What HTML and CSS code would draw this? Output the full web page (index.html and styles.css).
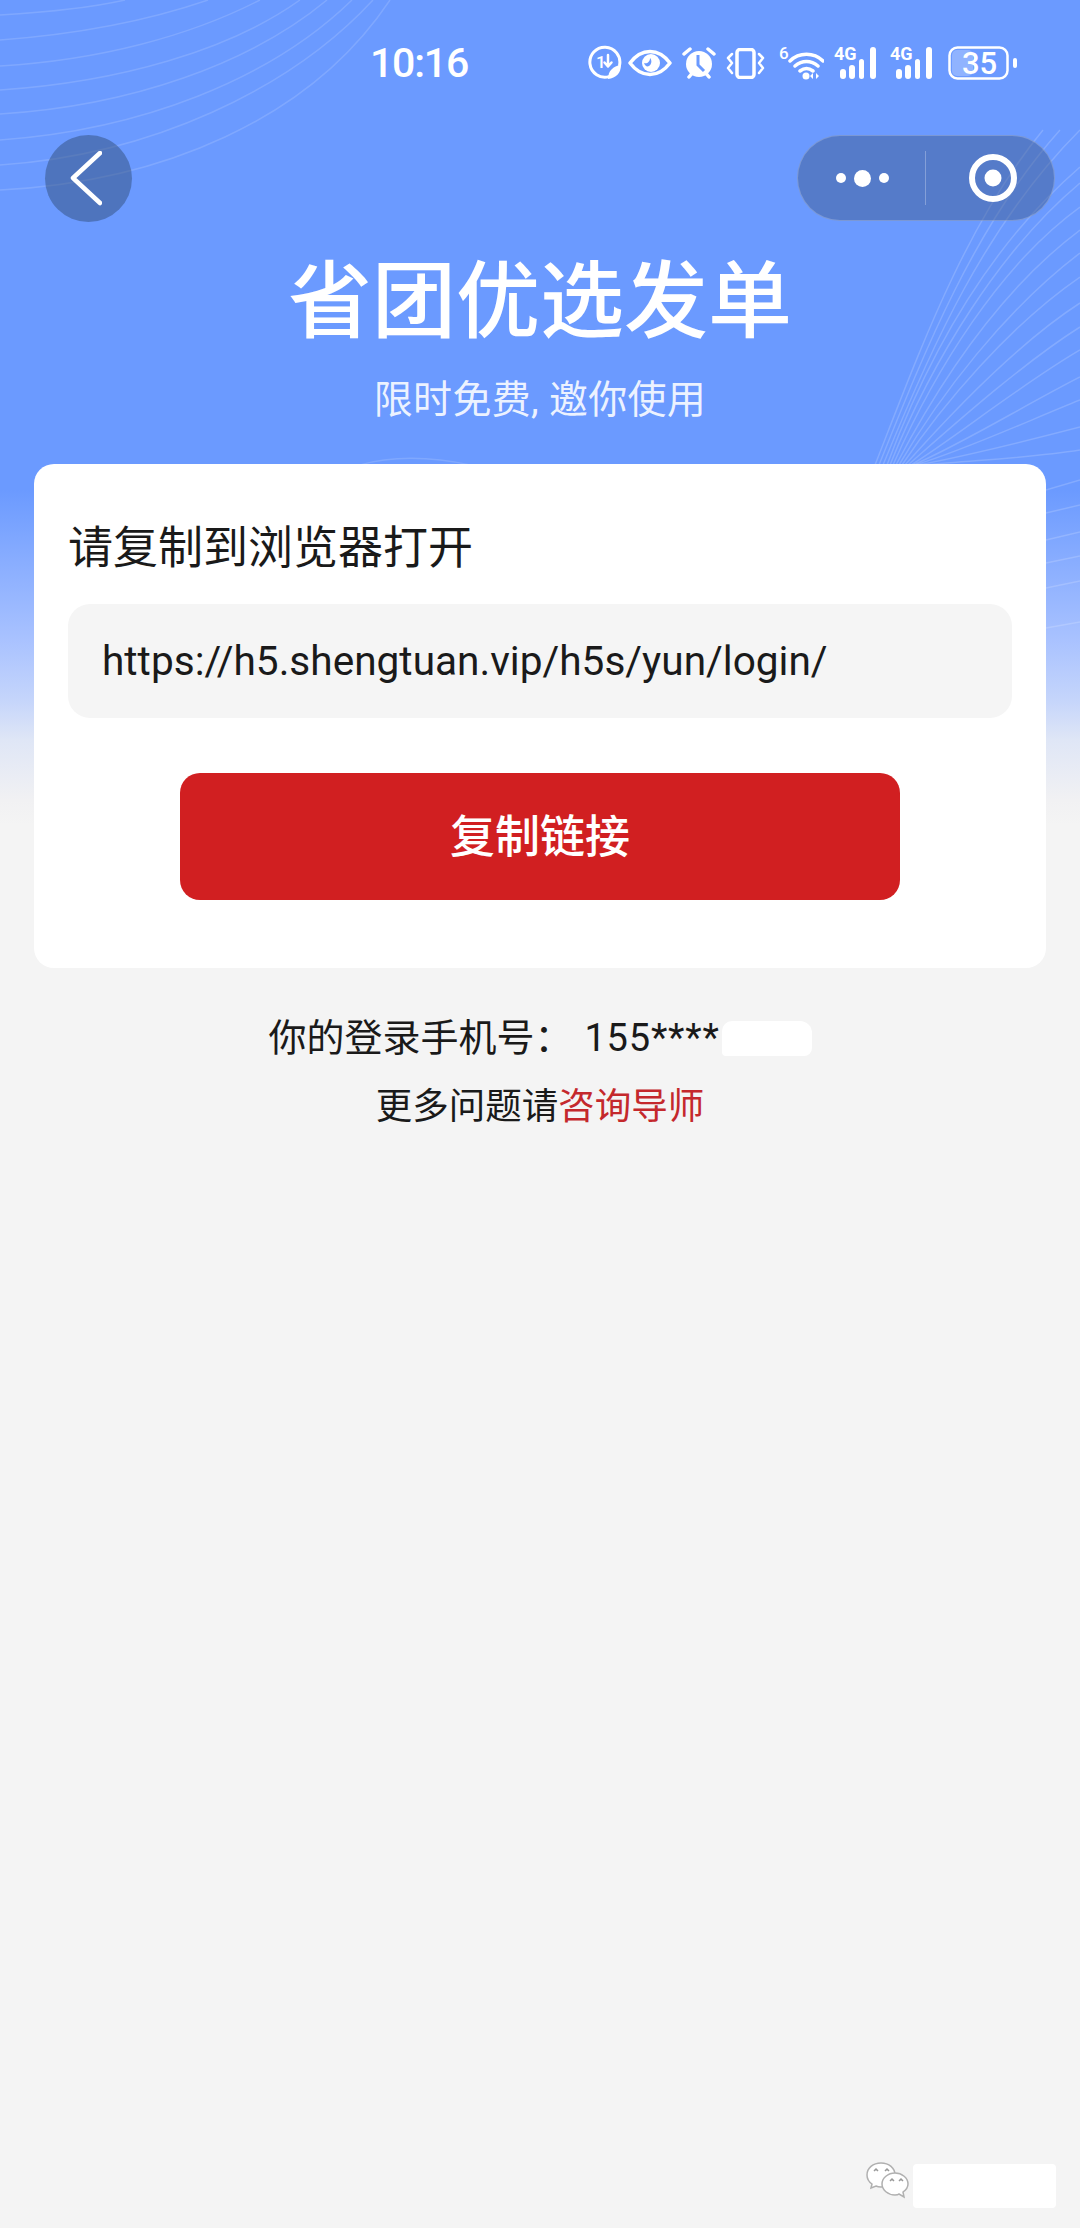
FILE: index.html
```html
<!DOCTYPE html>
<html lang="zh-CN">
<head>
<meta charset="utf-8">
<title>省团优选发单</title>
<link rel="stylesheet" href="styles.css">
</head>
<body>
<div class="page">
  <svg class="waves" width="1080" height="1000" viewBox="0 0 1080 1000" fill="none" aria-hidden="true">
    <g class="wave-left">
      <path d="M0 15C50 12 90 8 125 0"/>
      <path d="M0 40C80 34 150 20 208 0"/>
      <path d="M0 66C100 60 190 36 260 0"/>
      <path d="M0 90C120 82 230 50 300 0"/>
      <path d="M0 114C130 106 250 64 327 0"/>
      <path d="M0 140C140 130 270 80 352 0"/>
      <path d="M0 165C150 155 290 90 373 0"/>
      <path d="M0 190C160 182 310 120 390 0"/>
      <path d="M360 465C390 456 430 456 470 465"/>
    </g>
    <g class="wave-fan">
      <path d="M875 465C920 350 965 225 1043 130"/>
      <path d="M879 465C925 350 975 225 1060 130"/>
      <path d="M883 465C930 350 985 225 1080 130"/>
      <path d="M887 465C930 350 990 245 1080 167"/>
      <path d="M890 465C932 360 1000 250 1080 183"/>
      <path d="M893 465C935 370 1000 265 1080 207"/>
      <path d="M896 465C938 385 1000 290 1080 230"/>
      <path d="M899 465C940 395 1005 310 1080 253"/>
      <path d="M902 465C942 405 1010 325 1080 277"/>
      <path d="M905 465C945 420 1015 345 1080 303"/>
      <path d="M908 465C948 430 1020 365 1080 327"/>
      <path d="M911 465C952 440 1020 385 1080 350"/>
      <path d="M913 465C960 445 1025 405 1080 377"/>
      <path d="M915 465C965 450 1030 420 1080 400"/>
      <path d="M918 465C970 455 1030 440 1080 427"/>
      <path d="M925 465C975 460 1030 458 1080 450"/>
      <path d="M1046 490L1080 480"/>
      <path d="M1046 513L1080 505"/>
      <path d="M1046 540L1080 532"/>
      <path d="M1046 563L1080 556"/>
      <path d="M1046 588L1080 581"/>
      <path d="M1046 628L1080 622"/>
    </g>
  </svg>

  <header class="status">
    <span class="time">10:16</span>
    <div class="status-icons">
      <svg class="ic ic-leaf" width="34" height="42" viewBox="0 -4 34 42">
        <path class="s" d="M21 30.600A15 15 0 1 1 31.600 19"/>
        <text class="ic-t" x="8" y="22">1</text>
        <path class="s2" d="M20 9v11M16.500 16.500l3.500 4 3.500-4"/>
        <path class="f" d="M33 19c0 8-5 13-13 14 0-8 5-13 13-14z"/>
      </svg>
      <svg class="ic ic-eye" width="44" height="28" viewBox="0 0 44 28">
        <path class="s3" d="M2 14C8 6 15 2.500 22 2.500S36 6 42 14C36 22 29 25.500 22 25.500S8 22 2 14z"/>
        <circle class="f" cx="23" cy="14" r="9"/>
        <path class="cut" d="M16 14c3 1 6-1 6-5 2 2 2 6-1 8-2 1-4 0-5-3z"/>
      </svg>
      <svg class="ic ic-alarm" width="34" height="34" viewBox="0 0 34 34">
        <path class="s3" d="M2 8l6-5M32 8l-6-5M7 31l2.500-3M27 31l-2.500-3"/>
        <circle class="f" cx="17" cy="18" r="13"/>
        <path class="hand" d="M16 9v10l6 6"/>
      </svg>
      <svg class="ic ic-vib" width="39" height="31" viewBox="0 0 39 31">
        <rect class="s3" x="11" y="1.500" width="17" height="28" rx="3"/>
        <path class="s2" d="M6 6L2 10l4 5-4 5 4 5M33 6l4 4-4 5 4 5-4 5"/>
      </svg>
      <svg class="ic ic-wifi" width="45" height="41" viewBox="0 -4 45 41">
        <text class="ic-t" x="0" y="12">6</text>
        <path class="s3" d="M11 14C20 5 35 5 44 14M16 19C23 13 32 13 39 19M21 24C25 21 30 21 34 24"/>
        <circle class="f" cx="27" cy="29" r="3.500"/>
        <path class="f" d="M34 26v6l-3-3zM37 26v6l3-3z"/>
      </svg>
      <svg class="ic ic-sig" width="46" height="42" viewBox="0 -4 46 42">
        <text class="ic-g" x="0" y="14">4G</text>
        <rect class="f" x="6" y="23" width="6" height="10" rx="3"/>
        <rect class="f" x="15" y="19" width="6" height="14" rx="3"/>
        <rect class="f" x="25" y="13" width="5" height="20" rx="2.500"/>
        <rect class="f" x="36" y="1" width="6" height="32" rx="3"/>
      </svg>
      <svg class="ic ic-sig" width="46" height="42" viewBox="0 -4 46 42">
        <text class="ic-g" x="0" y="14">4G</text>
        <rect class="f" x="6" y="23" width="6" height="10" rx="3"/>
        <rect class="f" x="15" y="19" width="6" height="14" rx="3"/>
        <rect class="f" x="25" y="13" width="5" height="20" rx="2.500"/>
        <rect class="f" x="36" y="1" width="6" height="32" rx="3"/>
      </svg>
      <svg class="ic ic-bat" width="69" height="38" viewBox="0 -2 69 38">
        <rect class="bat-fill" x="4" y="4" width="21" height="26" rx="5"/>
        <rect class="s-bat" x="1.500" y="1.500" width="58" height="31" rx="8"/>
        <rect class="f" x="65" y="12" width="4" height="10" rx="2"/>
        <text class="ic-b" x="14" y="28">35</text>
      </svg>
    </div>
  </header>

  <nav class="nav">
    <button class="back" type="button" aria-label="返回">
      <svg width="32" height="55" viewBox="0 0 32 55"><path d="M30 2L3 27l27 25"/></svg>
    </button>
    <div class="capsule">
      <div class="capsule-part more">
        <i class="dot"></i><i class="dot dot-big"></i><i class="dot"></i>
      </div>
      <span class="divider"></span>
      <div class="capsule-part target">
        <svg width="50" height="50" viewBox="0 0 50 50">
          <circle class="ring" cx="25" cy="25" r="21"/>
          <circle class="core" cx="25" cy="25" r="8.500"/>
        </svg>
      </div>
    </div>
  </nav>

  <h1 class="title">省团优选发单</h1>
  <p class="subtitle">限时免费, 邀你使用</p>

  <main class="card">
    <h2 class="card-label">请复制到浏览器打开</h2>
    <div class="url">https://h5.shengtuan.vip/h5s/yun/login/</div>
    <button class="copy" type="button">复制链接</button>
  </main>

  <p class="phone">你的登录手机号&#65306;<span class="num">155****</span><span class="blot"></span></p>
  <p class="help">更多问题请<a class="link">咨询导师</a></p>

  <div class="watermark">
    <svg width="44" height="38" viewBox="0 0 44 38">
      <path class="bubble" d="M15 1C7 1 1 6 1 13c0 4 2 7 5 9l-1 4 5-2c2 1 3 1 5 1 8 0 14-5 14-12S23 1 15 1z"/>
      <path class="bubble" d="M29 11c-7 0-13 5-13 11s6 11 13 11c1 0 3 0 4-1l5 3-1-5c3-2 5-5 5-8 0-6-6-11-13-11z"/>
      <path class="eyes" d="M8 9l2-2 2 2M19 9l2-2 2 2M24 19l2-2 2 2M33 19l2-2 2 2"/>
    </svg>
    <span class="wm-blot"></span>
  </div>
</div>
</body>
</html>
```
FILE: styles.css
```css
* { box-sizing: border-box; }
html, body { margin: 0; padding: 0; }
body {
  font-family: Roboto, "Noto Sans CJK SC", sans-serif;
  color: #1a1a1a;
  background: #f4f4f4;
}
.page {
  position: relative;
  width: 1080px;
  height: 2228px;
  overflow: hidden;
  background: linear-gradient(180deg, #6b9aff 0, #6b9aff 490px, #a9c2ff 640px, #c5d5fb 700px, #dfe6f6 740px, #f1f1f3 800px, #f4f4f4 825px, #f4f4f4 100%);
}
.waves { position: absolute; left: 0; top: 0; }
.waves path { stroke-width: 1.500; }
.wave-left path { stroke: rgba(255,255,255,.14); }
.wave-fan path { stroke: rgba(255,255,255,.17); }

.status, .nav, .title, .subtitle, .card, .phone, .help { position: relative; }

.status {
  display: flex;
  align-items: center;
  height: 80px;
  padding: 46px 63px 0 370px;
  color: #fff;
}
.time { font-size: 41px; line-height: 34px; font-weight: 500; letter-spacing: -1.200px; }
.status-icons { display: flex; align-items: center; margin-left: auto; gap: 10px; }
.ic { display: block; flex: none; }
.ic-eye { margin-left: -4px; }
.ic-wifi { margin-left: 4px; }
.ic-bat { margin-left: 2px; }
.f { fill: #fff; }
.s, .s2, .s3, .s-bat { fill: none; stroke: #fff; stroke-linecap: round; stroke-linejoin: round; }
.s { stroke-width: 3; }
.s2 { stroke-width: 2.500; }
.s3 { stroke-width: 3.500; }
.s-bat { stroke-width: 2.500; }
.cut { fill: #6b9aff; }
.hand { fill: none; stroke: #6b9aff; stroke-width: 3; }
.bat-fill { fill: rgba(255,255,255,.25); }
.ic-t { font: 500 17px Roboto, sans-serif; fill: #fff; }
.ic-g { font: 700 18px Roboto, sans-serif; fill: #fff; }
.ic-b { font: 500 31px Roboto, sans-serif; fill: #fff; }

.nav {
  display: flex;
  align-items: center;
  justify-content: space-between;
  height: 88px;
  margin-top: 54px;
  padding: 0 25px 0 45px;
}
.back {
  display: flex;
  align-items: center;
  justify-content: center;
  width: 87px;
  height: 87px;
  padding: 0 6px 0 0;
  border: 0;
  border-radius: 50%;
  background: rgba(45,70,108,.45);
}
.back path { fill: none; stroke: #fff; stroke-width: 4.500; stroke-linecap: round; stroke-linejoin: round; }
.capsule {
  display: flex;
  align-items: center;
  width: 258px;
  height: 86px;
  border: 1.500px solid rgba(255,255,255,.22);
  border-radius: 43px;
  background: rgba(60,87,135,.45);
}
.capsule-part { display: flex; align-items: center; justify-content: center; }
.more { width: 127px; gap: 8px; padding-left: 1px; }
.dot { display: block; width: 10px; height: 10px; border-radius: 50%; background: #fff; }
.dot-big { width: 17px; height: 17px; }
.divider { width: 1px; height: 54px; background: rgba(255,255,255,.28); }
.target { flex: 1; padding-left: 5px; }
.target svg { display: block; }
.ring { fill: none; stroke: #fff; stroke-width: 6; }
.core { fill: #fff; }

.title {
  margin: 31px 0 0;
  font-size: 84px;
  line-height: 100px;
  font-weight: 500;
  text-align: center;
  color: #fff;
}
.subtitle {
  margin: 22px 0 0;
  font-size: 39px;
  line-height: 50px;
  letter-spacing: .3px;
  text-align: center;
  color: rgba(255,255,255,.88);
}

.card {
  display: flex;
  flex-direction: column;
  margin: 39px 34px 0;
  padding: 55px 34px 68px;
  border-radius: 20px;
  background: #fff;
}
.card-label { margin: 0; font-size: 45px; line-height: 60px; font-weight: 400; }
.url {
  display: flex;
  align-items: center;
  height: 114px;
  margin-top: 25px;
  padding: 0 34px;
  border-radius: 22px;
  background: #f5f5f5;
  font-size: 40.600px;
}
.copy {
  align-self: center;
  width: 720px;
  height: 127px;
  margin-top: 55px;
  padding: 0 0 7px;
  border: 0;
  border-radius: 20px;
  background: #d11f21;
  color: #fff;
  font: 500 45px Roboto, "Noto Sans CJK SC", sans-serif;
}

.phone {
  display: flex;
  justify-content: center;
  align-items: center;
  margin: 45px 0 0;
  font-size: 38px;
  line-height: 50px;
}
.num { margin-left: 12px; letter-spacing: .8px; }
.blot {
  display: block;
  width: 90px;
  height: 35px;
  margin-left: 2px;
  border-radius: 10px 12px 8px 4px;
  background: #fff;
}
.help { margin: 19px 0 0; font-size: 36.500px; line-height: 50px; text-align: center; }
.link { color: #c4282c; }

.watermark {
  position: absolute;
  left: 866px;
  top: 2162px;
  display: flex;
  align-items: flex-start;
  gap: 3px;
}
.bubble { fill: #fff; stroke: #b0b0b0; stroke-width: 1.500; }
.eyes { fill: none; stroke: #999; stroke-width: 1.500; }
.wm-blot {
  display: block;
  width: 143px;
  height: 44px;
  margin-top: 2px;
  border-radius: 4px;
  background: #fff;
}
```
